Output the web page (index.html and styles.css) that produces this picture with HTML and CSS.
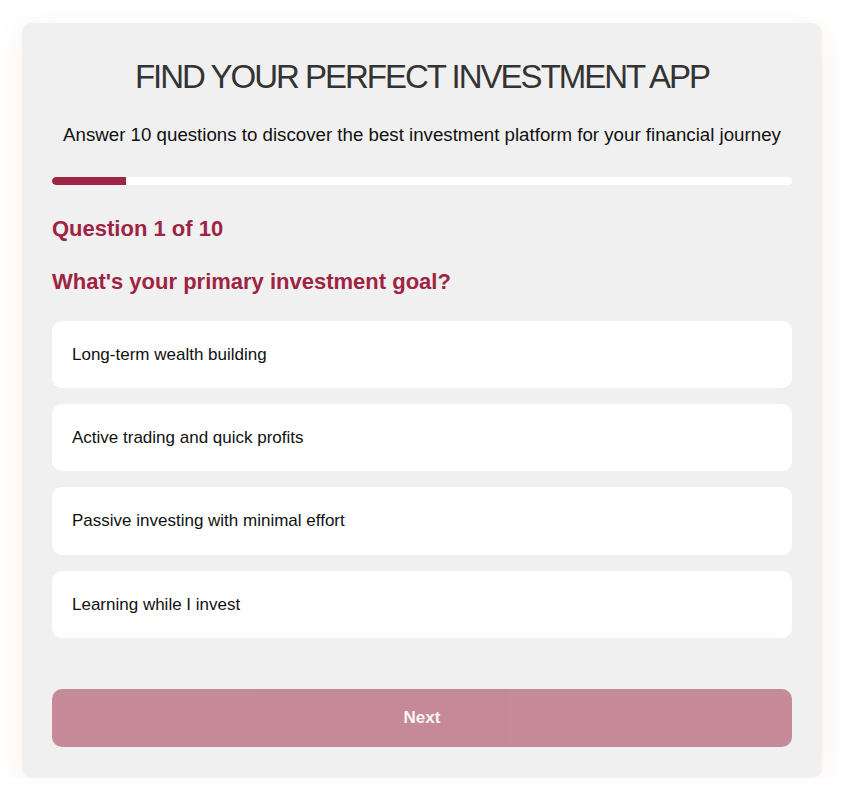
FILE: index.html
```html
<!DOCTYPE html>
<html lang="en">
<head>
<meta charset="utf-8">
<title>Find Your Perfect Investment App</title>
<link rel="stylesheet" href="styles.css">
</head>
<body>
<main class="quiz">
  <h1 class="quiz-title">FIND YOUR PERFECT INVESTMENT APP</h1>
  <p class="quiz-intro">Answer 10 questions to discover the best investment platform for your financial journey</p>
  <div class="progress"><div class="progress-fill" style="width: 10%"></div></div>
  <h2 class="step-label">Question 1 of 10</h2>
  <h3 class="question">What's your primary investment goal?</h3>
  <ul class="options">
    <li class="option">Long-term wealth building</li>
    <li class="option">Active trading and quick profits</li>
    <li class="option">Passive investing with minimal effort</li>
    <li class="option">Learning while I invest</li>
  </ul>
  <button class="next-btn" disabled>Next</button>
</main>
</body>
</html>
```

FILE: styles.css
```css
* {
  box-sizing: border-box;
}

body {
  margin: 0;
  padding: 23px 0 0;
  background: #ffffff;
  font-family: "Liberation Sans", Arial, sans-serif;
  color: #000;
}

.quiz {
  width: 800px;
  margin: 0 0 0 22px;
  padding: 30px 30px 31px;
  background: #f0f0f0;
  border-radius: 10px;
  box-shadow: 0 6px 28px rgba(210, 130, 70, 0.12);
}

.quiz-title {
  margin: 5px 0 0;
  font-size: 33px;
  line-height: 38px;
  font-weight: 400;
  letter-spacing: -2px;
  color: #333333;
  text-align: center;
}

.quiz-intro {
  margin: 28px 0 0;
  font-size: 18.7px;
  line-height: 21px;
  text-align: center;
  color: #111;
}

.progress {
  margin-top: 32px;
  height: 8px;
  border-radius: 4px;
  background: #ffffff;
  overflow: hidden;
}

.progress-fill {
  height: 100%;
  background: #9d2442;
  border-radius: 4px 0 0 4px;
}

.step-label {
  margin: 31px 0 0;
  font-size: 22px;
  line-height: 25px;
  font-weight: 700;
  color: #9d2442;
}

.question {
  margin: 28px 0 0;
  font-size: 22px;
  line-height: 25px;
  font-weight: 700;
  color: #9d2442;
}

.options {
  list-style: none;
  margin: 27px 0 0;
  padding: 0;
  display: flex;
  flex-direction: column;
  gap: 16px;
}

.option {
  padding: 20px;
  background: #ffffff;
  border-radius: 10px;
  font-size: 17px;
  line-height: 27.2px;
  color: #111;
}

.next-btn {
  display: block;
  width: 100%;
  margin-top: 51px;
  padding: 15.5px;
  border: 0;
  border-radius: 10px;
  background: #9d2442;
  color: #ffffff;
  font-family: inherit;
  font-size: 17px;
  line-height: 27.2px;
  font-weight: 700;
}

.next-btn:disabled {
  opacity: 0.5;
}
```
